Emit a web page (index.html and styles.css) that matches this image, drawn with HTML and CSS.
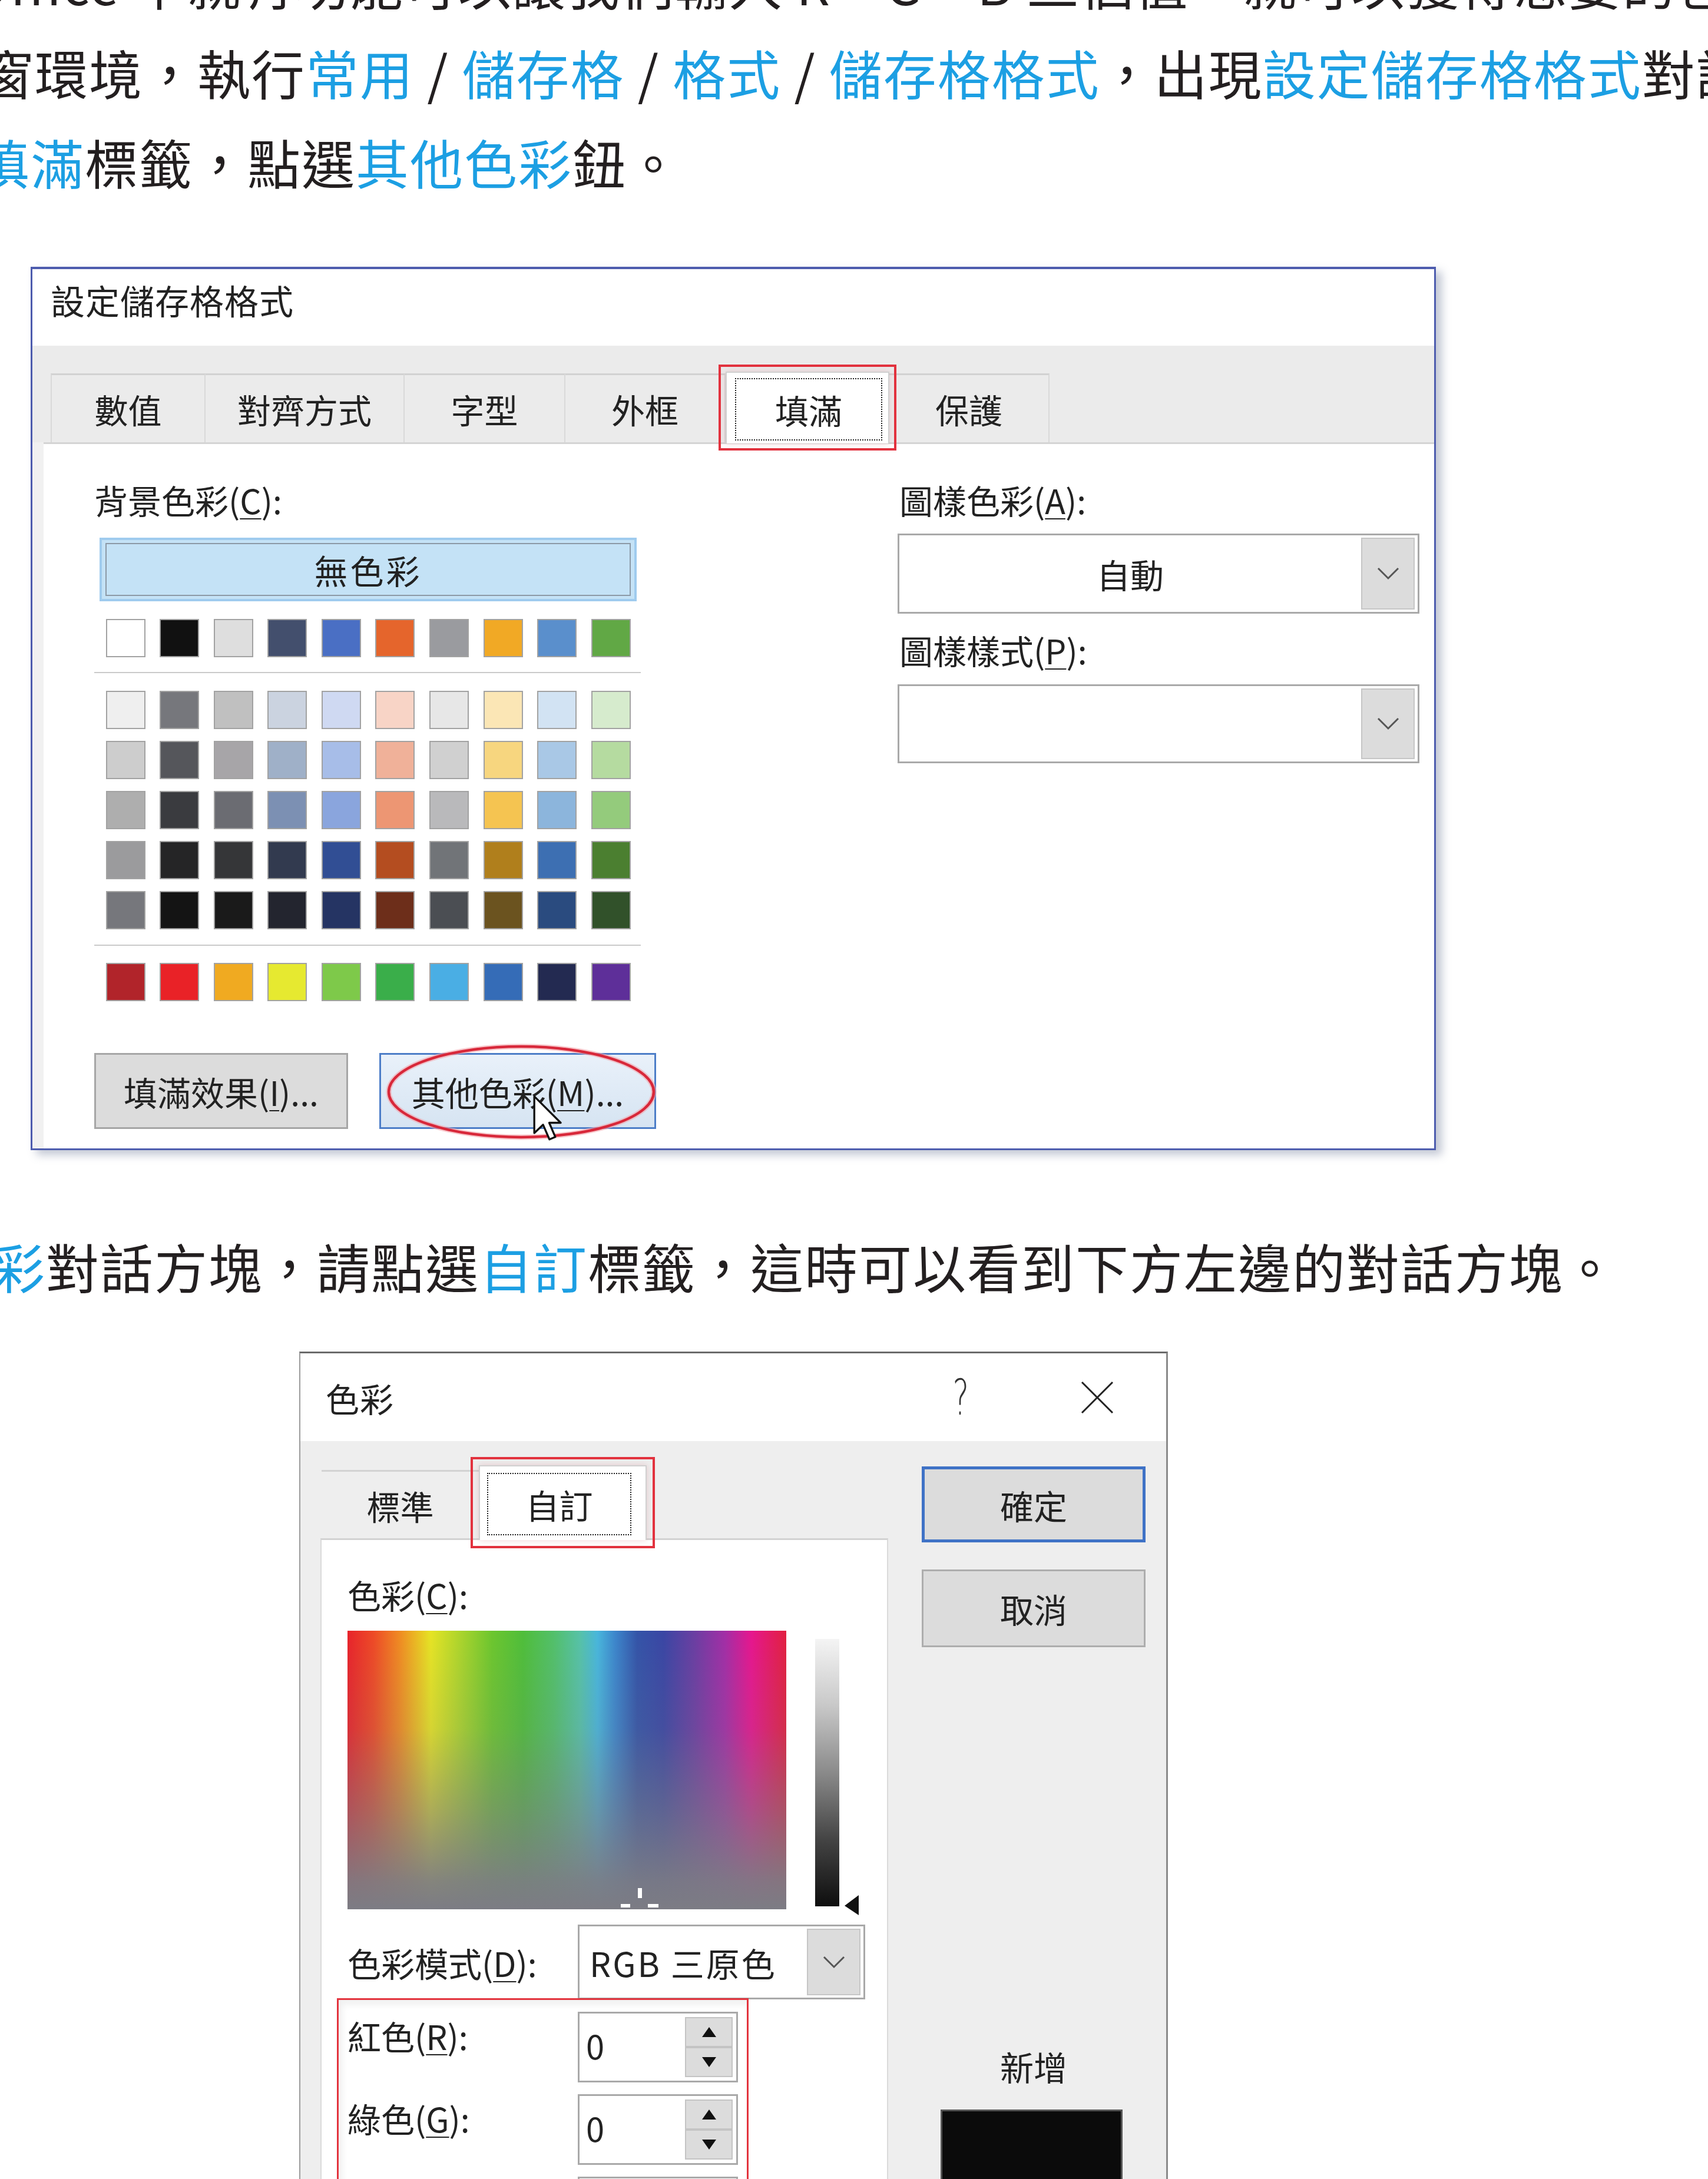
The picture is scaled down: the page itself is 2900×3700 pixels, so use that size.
FILE: index.html
```html
<!DOCTYPE html>
<html lang="zh-Hant">
<head>
<meta charset="utf-8">
<title>色彩</title>
<link rel="stylesheet" href="styles.css">
</head>
<body>
<div class="page">
  <div class="para top-para">
    <div class="line l1">Office 中就有功能可以讓我們輸入 R、G、B 三個值，就可以獲得想要的色彩，不必再調整</div>
    <div class="line l2">窗環境，執行<span class="hl">常用</span> / <span class="hl">儲存格</span> / <span class="hl">格式</span> / <span class="hl">儲存格格式</span>，出現<span class="hl">設定儲存格格式</span>對話方塊</div>
    <div class="line l3"><span class="hl">填滿</span>標籤，點選<span class="hl">其他色彩</span>鈕。</div>
  </div>

  <div class="dlg1">
    <div class="d1-title">設定儲存格格式</div>
    <div class="d1-tabbar">
      <div class="tab w1">數值</div>
      <div class="tab w2">對齊方式</div>
      <div class="tab w3">字型</div>
      <div class="tab w4">外框</div>
      <div class="tab-sel d1-sel"><span class="focus f1">填滿</span></div>
      <div class="tab w6">保護</div>
    </div>
    <div class="d1-panel">
      <div class="d1-left">
        <div class="lbl">背景色彩(<u>C</u>):</div>
        <div class="nocolor"><span>無色彩</span></div>
        <div class="sw-row first-row">
          <i class="sw" style="background:#ffffff"></i><i class="sw" style="background:#111111"></i><i class="sw" style="background:#dedede"></i><i class="sw" style="background:#434f6d"></i><i class="sw" style="background:#4a6fc4"></i><i class="sw" style="background:#e5652c"></i><i class="sw" style="background:#9a9b9f"></i><i class="sw" style="background:#f1a925"></i><i class="sw" style="background:#5a8fcc"></i><i class="sw" style="background:#61a845"></i>
        </div>
        <div class="sep sep1"></div>
        <div class="sw-block">
          <div class="sw-row">
            <i class="sw" style="background:#efefef"></i><i class="sw" style="background:#76777c"></i><i class="sw" style="background:#c0c0c0"></i><i class="sw" style="background:#cbd3e0"></i><i class="sw" style="background:#cfd9f2"></i><i class="sw" style="background:#f8d4c6"></i><i class="sw" style="background:#e7e7e7"></i><i class="sw" style="background:#fbe6b5"></i><i class="sw" style="background:#d2e3f3"></i><i class="sw" style="background:#d6ebcd"></i>
          </div>
          <div class="sw-row">
            <i class="sw" style="background:#cdcdcd"></i><i class="sw" style="background:#55565b"></i><i class="sw" style="background:#a7a5a8"></i><i class="sw" style="background:#9fb0c8"></i><i class="sw" style="background:#a7bde8"></i><i class="sw" style="background:#f0b199"></i><i class="sw" style="background:#d0d0d0"></i><i class="sw" style="background:#f7d67f"></i><i class="sw" style="background:#a9c8e6"></i><i class="sw" style="background:#b5dba0"></i>
          </div>
          <div class="sw-row">
            <i class="sw" style="background:#aeaeae"></i><i class="sw" style="background:#3a3b3f"></i><i class="sw" style="background:#6b6c72"></i><i class="sw" style="background:#7c90b3"></i><i class="sw" style="background:#8aa5dd"></i><i class="sw" style="background:#ed9673"></i><i class="sw" style="background:#b9b9bb"></i><i class="sw" style="background:#f5c451"></i><i class="sw" style="background:#8cb5dc"></i><i class="sw" style="background:#94cb7c"></i>
          </div>
          <div class="sw-row">
            <i class="sw" style="background:#9b9b9d"></i><i class="sw" style="background:#252526"></i><i class="sw" style="background:#353638"></i><i class="sw" style="background:#323a4f"></i><i class="sw" style="background:#314e94"></i><i class="sw" style="background:#b44d20"></i><i class="sw" style="background:#717478"></i><i class="sw" style="background:#b07f1c"></i><i class="sw" style="background:#3d6fb2"></i><i class="sw" style="background:#4b7f30"></i>
          </div>
          <div class="sw-row">
            <i class="sw" style="background:#76777c"></i><i class="sw" style="background:#141414"></i><i class="sw" style="background:#1a1a1a"></i><i class="sw" style="background:#23252f"></i><i class="sw" style="background:#253463"></i><i class="sw" style="background:#6d2e1a"></i><i class="sw" style="background:#4b4e53"></i><i class="sw" style="background:#6b531f"></i><i class="sw" style="background:#2a4b7f"></i><i class="sw" style="background:#31512a"></i>
          </div>
        </div>
        <div class="sep sep2"></div>
        <div class="sw-row last-row">
          <i class="sw" style="background:#b1242a"></i><i class="sw" style="background:#e92227"></i><i class="sw" style="background:#f0aa21"></i><i class="sw" style="background:#e6e930"></i><i class="sw" style="background:#7ec94a"></i><i class="sw" style="background:#3aae4a"></i><i class="sw" style="background:#4aaee4"></i><i class="sw" style="background:#356cb7"></i><i class="sw" style="background:#232a51"></i><i class="sw" style="background:#5e2f99"></i>
        </div>
        <div class="btn-row">
          <div class="btn btn-fill">填滿效果(<u>I</u>)...</div>
          <div class="btn btn-more">其他色彩(<u>M</u>)...
            <svg class="ring" viewBox="0 0 460 164" width="460" height="164">
              <ellipse cx="230" cy="82" rx="225" ry="77" fill="none" stroke="#f3a3aa" stroke-width="9" opacity="0.6"/>
              <ellipse cx="230" cy="82" rx="225" ry="77" fill="none" stroke="#d8283a" stroke-width="4.5"/>
            </svg>
            <svg class="cursor" viewBox="0 0 13 20" width="54" height="84">
              <path d="M1 1 L1 16 L4.6 12.6 L7.2 18.6 L9.6 17.6 L7.1 11.8 L11.8 11.8 Z" fill="#fff" stroke="#111" stroke-width="0.8" stroke-linejoin="round"/>
            </svg>
          </div>
        </div>
      </div>
      <div class="d1-right">
        <div class="lbl">圖樣色彩(<u>A</u>):</div>
        <div class="combo combo1">
          <span class="combo-text center">自動</span>
          <span class="combo-arrow"><svg viewBox="0 0 38 22" width="38" height="22"><polyline points="2,2 19,19 36,2" fill="none" stroke="#555" stroke-width="3"/></svg></span>
        </div>
        <div class="lbl lbl2">圖樣樣式(<u>P</u>):</div>
        <div class="combo combo2">
          <span class="combo-text"></span>
          <span class="combo-arrow"><svg viewBox="0 0 38 22" width="38" height="22"><polyline points="2,2 19,19 36,2" fill="none" stroke="#555" stroke-width="3"/></svg></span>
        </div>
      </div>
    </div>
  </div>

  <div class="para mid-para">
    <div class="line l4"><span class="hl">彩</span>對話方塊，請點選<span class="hl">自訂</span>標籤，這時可以看到下方左邊的對話方塊。</div>
  </div>

  <div class="dlg2">
    <div class="d2-title">
      <span class="d2-name">色彩</span>
      <span class="d2-help">?</span>
      <svg class="d2-close" viewBox="0 0 58 58" width="58" height="58"><path d="M3 3 L55 55 M55 3 L3 55" stroke="#222" stroke-width="3" fill="none"/></svg>
    </div>
    <div class="d2-body">
      <div class="d2-left">
        <div class="d2-tabs">
          <div class="tab w-std">標準</div>
          <div class="tab-sel d2-sel"><span class="focus f2">自訂</span></div>
        </div>
        <div class="d2-panel">
          <div class="lbl">色彩(<u>C</u>):</div>
          <div class="pick-row">
            <div class="spectrum">
              <i class="mk mk-v"></i><i class="mk mk-l"></i><i class="mk mk-r"></i>
            </div>
            <div class="lum"></div>
            <svg class="lum-arrow" viewBox="0 0 24 34" width="24" height="34"><polygon points="24,0 0,18 24,34" fill="#111"/></svg>
          </div>
          <div class="mode-row">
            <div class="lbl mode-lbl">色彩模式(<u>D</u>):</div>
            <div class="combo combo3">
              <span class="combo-text left">RGB 三原色</span>
              <span class="combo-arrow"><svg viewBox="0 0 38 22" width="38" height="22"><polyline points="2,2 19,19 36,2" fill="none" stroke="#555" stroke-width="3"/></svg></span>
            </div>
          </div>
          <div class="rgb-box">
            <div class="rgb-row">
              <div class="lbl rgb-lbl">紅色(<u>R</u>):</div>
              <div class="spin">
                <span class="spin-val">0</span>
                <span class="spin-btns"><span class="sb"><i class="tri-up"></i></span><span class="sb"><i class="tri-down"></i></span></span>
              </div>
            </div>
            <div class="rgb-row">
              <div class="lbl rgb-lbl">綠色(<u>G</u>):</div>
              <div class="spin">
                <span class="spin-val">0</span>
                <span class="spin-btns"><span class="sb"><i class="tri-up"></i></span><span class="sb"><i class="tri-down"></i></span></span>
              </div>
            </div>
            <div class="rgb-row">
              <div class="lbl rgb-lbl">藍色(<u>B</u>):</div>
              <div class="spin">
                <span class="spin-val">0</span>
                <span class="spin-btns"><span class="sb"><i class="tri-up"></i></span><span class="sb"><i class="tri-down"></i></span></span>
              </div>
            </div>
          </div>
        </div>
      </div>
      <div class="d2-right">
        <div class="btn btn-ok">確定</div>
        <div class="btn btn-cancel">取消</div>
        <div class="new-lbl">新增</div>
        <div class="new-box"></div>
      </div>
    </div>
  </div>
</div>
</body>
</html>
```

FILE: styles.css
```css
html, body {
  margin: 0;
  padding: 0;
}
body {
  width: 2900px;
  height: 3700px;
  overflow: hidden;
  background: #ffffff;
  font-family: "Noto Sans CJK TC", "Noto Sans", sans-serif;
  color: #231f20;
}
.page {
  display: flow-root;
  width: 2900px;
}
u {
  text-decoration-thickness: 2px;
  text-underline-offset: 7px;
}

/* body text */
.para {
  font-size: 90px;
  line-height: 152px;
  letter-spacing: 2px;
  white-space: nowrap;
}
.top-para { margin-top: -106px; }
.line { white-space: nowrap; }
.l1 { margin-left: -52px; }
.l2 { margin-left: -33px; }
.l3 { margin-left: -40px; }
.l4 { margin-left: -14px; }
.hl { color: #1c9fe3; }
.mid-para { margin-top: 120px; }

/* ---------- dialog 1 ---------- */
.dlg1 {
  margin-top: 103px;
  margin-left: 52px;
  width: 2386px;
  height: 1500px;
  box-sizing: border-box;
  border: 3px solid #4d5cae;
  border-top-width: 4px;
  background: #f1f1f1;
  box-shadow: 10px 8px 14px rgba(120, 130, 160, 0.45);
  display: flex;
  flex-direction: column;
  color: #222;
}
.d1-title {
  flex-shrink: 0;
  height: 130px;
  background: #ffffff;
  display: flex;
  align-items: center;
  padding-left: 31px;
  padding-bottom: 26px;
  box-sizing: border-box;
  font-size: 58px;
  letter-spacing: 1px;
}
.d1-tabbar {
  flex-shrink: 0;
  height: 164px;
  background: #ebebeb;
  display: flex;
  align-items: flex-end;
  padding-left: 31px;
}
.tab {
  flex-shrink: 0;
  height: 117px;
  box-sizing: border-box;
  border-top: 3px solid #d2d2d2;
  border-right: 2px solid #d9d9d9;
  display: flex;
  align-items: center;
  justify-content: center;
  font-size: 57px;
  background: #ebebeb;
}
.w1 { width: 263px; border-left: 2px solid #d9d9d9; }
.w2 { width: 338px; }
.w3 { width: 273px; }
.w4 { width: 272px; }
.w6 { width: 272px; }
.tab-sel {
  flex-shrink: 0;
  position: relative;
  z-index: 1;
  background: #ffffff;
  box-sizing: border-box;
  border: 2px solid #d0d0d0;
  border-bottom: none;
  display: flex;
  outline: 4px solid #e2323e;
  font-size: 57px;
  box-shadow: 0 0 10px rgba(200, 80, 90, 0.25);
}
.d1-sel {
  width: 278px;
  height: 122px;
  margin-bottom: -2px;
  outline-offset: 8px;
}
.focus {
  flex: 1;
  display: flex;
  align-items: center;
  justify-content: center;
  border: 2px dotted #222;
}
.f1 { margin: 9px 10px 5px 14px; }

.d1-panel {
  flex: 1;
  margin-left: 19px;
  background: #ffffff;
  border-top: 3px solid #d4d4d4;
  display: flex;
  padding-left: 86px;
  overflow: hidden;
}
.lbl {
  flex-shrink: 0;
  height: 80px;
  line-height: 80px;
  font-size: 57px;
  white-space: nowrap;
}
.d1-left {
  flex-shrink: 0;
  width: 928px;
  display: flex;
  flex-direction: column;
}
.d1-left > .lbl { margin-top: 54px; }
.nocolor {
  flex-shrink: 0;
  margin-top: 25px;
  margin-left: 9px;
  width: 912px;
  height: 108px;
  box-sizing: border-box;
  background: #c4e2f6;
  border: 4px solid #9fcbee;
  padding: 5px 6px;
  display: flex;
}
.nocolor span {
  flex: 1;
  border: 2px solid #8c99a6;
  display: flex;
  align-items: center;
  justify-content: center;
  font-size: 57px;
  letter-spacing: 4px;
}
.sw-row {
  flex-shrink: 0;
  display: flex;
  gap: 24.6px;
  margin-left: 19.5px;
}
.first-row { margin-top: 30px; }
.last-row { margin-top: 29px; }
.sw {
  flex-shrink: 0;
  display: block;
  width: 67px;
  height: 65px;
  box-sizing: border-box;
  border: 2px solid #a2a2a2;
}
.sep {
  flex-shrink: 0;
  height: 2px;
  background: #cacaca;
  width: 928px;
}
.sep1 { margin-top: 25px; }
.sep2 { margin-top: 26px; }
.sw-block {
  flex-shrink: 0;
  margin-top: 30px;
  display: flex;
  flex-direction: column;
  gap: 20px;
}
.btn-row {
  flex-shrink: 0;
  margin-top: 88px;
  display: flex;
}
.btn {
  flex-shrink: 0;
  height: 129px;
  box-sizing: border-box;
  display: flex;
  align-items: center;
  justify-content: center;
  font-size: 57px;
  white-space: nowrap;
}
.btn-fill {
  width: 431px;
  background: #dcdcdc;
  border: 3px solid #a6a6a6;
}
.btn-more {
  position: relative;
  margin-left: 53px;
  width: 470px;
  background: linear-gradient(#e9f1fa, #d6e4f2);
  border: 3px solid #4d7ec8;
}
.ring {
  position: absolute;
  left: 8px;
  top: -19px;
}
.cursor {
  position: absolute;
  left: 256px;
  top: 66px;
}

.d1-right {
  flex-shrink: 0;
  margin-left: 436px;
  width: 886px;
  display: flex;
  flex-direction: column;
}
.d1-right > .lbl { margin-top: 54px; margin-left: 3px; }
.d1-right > .lbl2 { margin-top: 21px; }
.combo {
  flex-shrink: 0;
  display: flex;
  box-sizing: border-box;
  border: 3px solid #a9a9a9;
  background: #ffffff;
}
.combo1 { margin-top: 18px; height: 136px; }
.combo2 { margin-top: 19px; height: 134px; }
.combo-text {
  flex: 1;
  display: flex;
  align-items: center;
  font-size: 57px;
}
.combo-text.center { justify-content: center; }
.combo-text.left { padding-left: 17px; font-size: 57px; letter-spacing: 3px; }
.combo-arrow {
  width: 87px;
  margin: 4px 5px 4px 0;
  background: #dcdcdc;
  border: 2px solid #c6c6c6;
  display: flex;
  align-items: center;
  justify-content: center;
}

/* ---------- dialog 2 ---------- */
.dlg2 {
  margin-top: 70px;
  margin-left: 508px;
  width: 1475px;
  box-sizing: border-box;
  border-top: 3px solid #6a6a6a;
  border-left: 2px solid #9c9c9c;
  border-right: 3px solid #8a8a8a;
  background: #eeeeee;
  display: flex;
  flex-direction: column;
  color: #222;
}
.d2-title {
  flex-shrink: 0;
  height: 149px;
  background: #ffffff;
  display: flex;
  align-items: center;
  padding-left: 43px;
  font-size: 57px;
}
.d2-name { letter-spacing: 1px; }
.d2-help {
  margin-left: auto;
  font-weight: 200;
  font-size: 84px;
  line-height: 1;
  font-family: "DejaVu Sans", sans-serif;
  transform: scaleX(0.62);
  color: #333;
}
.d2-close {
  margin-left: 180px;
  margin-right: 88px;
}
.d2-body {
  flex-shrink: 0;
  display: flex;
  padding-left: 34px;
}
.d2-left {
  flex-shrink: 0;
  width: 964px;
  display: flex;
  flex-direction: column;
}
.d2-tabs {
  flex-shrink: 0;
  margin-top: 49px;
  height: 116px;
  display: flex;
  align-items: flex-end;
  padding-left: 2px;
}
.w-std {
  width: 267px;
  height: 116px;
  border-right: none;
  background: #eeeeee;
}
.d2-sel {
  width: 285px;
  height: 127px;
  margin-bottom: -3px;
  outline-offset: 10px;
}
.f2 { margin: 11px 24px 8px 12px; }
.d2-panel {
  flex-shrink: 0;
  background: #ffffff;
  border-top: 3px solid #d2d2d2;
  border-left: 2px solid #dadada;
  border-right: 2px solid #dadada;
  padding-left: 44px;
  padding-bottom: 60px;
  display: flex;
  flex-direction: column;
}
.d2-panel > .lbl { margin-top: 52px; }
.pick-row {
  flex-shrink: 0;
  margin-top: 22px;
  display: flex;
  align-items: flex-start;
  height: 473px;
}
.spectrum {
  flex-shrink: 0;
  position: relative;
  width: 745px;
  height: 473px;
  background:
    linear-gradient(to bottom, rgba(124,124,132,0) 0%, rgba(124,124,132,0.15) 35%, rgba(124,124,132,0.55) 65%, rgba(124,124,132,0.92) 90%, rgba(124,124,132,1) 100%),
    linear-gradient(to right, #e8232b 0%, #ee4a26 6%, #f08c22 12%, #e6e424 19%, #a9d42c 26%, #6cc62e 33%, #4fbe3a 40%, #52c06a 47%, #56c2a8 53%, #48b6dc 57%, #3c86cc 61%, #3454a8 66%, #3a46a4 72%, #6a3ea2 79%, #a22ea6 86%, #e6168e 92%, #e22040 100%);
}
.mk {
  position: absolute;
  display: block;
  background: #ffffff;
}
.mk-v { left: 493px; top: 437px; width: 7px; height: 17px; }
.mk-l { left: 464px; top: 464px; width: 16px; height: 6px; }
.mk-r { left: 510px; top: 464px; width: 18px; height: 6px; }
.lum {
  flex-shrink: 0;
  margin-left: 49px;
  margin-top: 14px;
  width: 41px;
  height: 454px;
  background: linear-gradient(to bottom, #f4f4f4 0%, #c8c8c8 25%, #8a8a8a 50%, #444 75%, #0e0e0e 100%);
}
.lum-arrow {
  flex-shrink: 0;
  margin-left: 9px;
  margin-top: 449px;
}
.mode-row {
  flex-shrink: 0;
  margin-top: 26px;
  display: flex;
  align-items: center;
}
.mode-lbl { width: 391px; }
.combo3 {
  width: 488px;
  height: 127px;
}
.rgb-box {
  flex-shrink: 0;
  margin-left: -18px;
  margin-top: -2px;
  width: 699px;
  box-sizing: border-box;
  border: 3px solid #e3343e;
  border-bottom: none;
  padding: 20px 0 0 15px;
  display: flex;
  flex-direction: column;
  gap: 20px;
  box-shadow: inset 6px 8px 12px rgba(0, 0, 0, 0.06);
}
.rgb-row {
  flex-shrink: 0;
  display: flex;
  align-items: flex-start;
}
.rgb-lbl { width: 391px; }
.spin {
  flex-shrink: 0;
  width: 272px;
  height: 120px;
  box-sizing: border-box;
  border: 3px solid #a9a9a9;
  background: #ffffff;
  display: flex;
}
.spin-val {
  flex: 1;
  padding-left: 11px;
  font-size: 56px;
  line-height: 108px;
}
.spin-btns {
  width: 81px;
  margin: 6px 6px 6px 0;
  display: flex;
  flex-direction: column;
}
.sb {
  flex: 1;
  background: #dcdcdc;
  border: 2px solid #c4c4c4;
  display: flex;
  align-items: center;
  justify-content: center;
}
.tri-up, .tri-down {
  display: block;
  width: 0;
  height: 0;
  border-left: 12px solid transparent;
  border-right: 12px solid transparent;
}
.tri-up { border-bottom: 17px solid #111; }
.tri-down { border-top: 17px solid #111; }

.d2-right {
  flex-shrink: 0;
  margin-left: 57px;
  width: 380px;
  display: flex;
  flex-direction: column;
}
.btn-ok {
  margin-top: 43px;
  height: 129px;
  background: #dcdcdc;
  border: 5px solid #3f72c6;
}
.btn-cancel {
  margin-top: 46px;
  height: 132px;
  background: #dcdcdc;
  border: 3px solid #adadad;
}
.new-lbl {
  flex-shrink: 0;
  margin-top: 671px;
  height: 80px;
  line-height: 80px;
  text-align: center;
  font-size: 57px;
}
.new-box {
  flex-shrink: 0;
  margin-top: 34px;
  margin-left: 32px;
  width: 309px;
  height: 300px;
  box-sizing: border-box;
  background: #0b0b0b;
  border: 3px solid #555555;
}
```
